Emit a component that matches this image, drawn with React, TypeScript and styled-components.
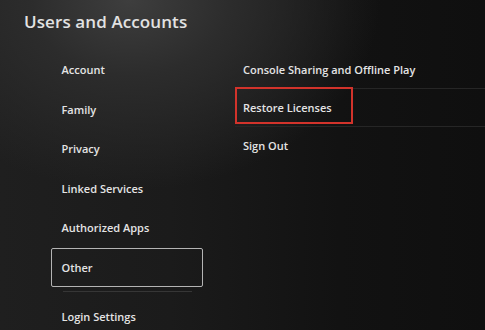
import React from 'react'
import styled, { createGlobalStyle } from 'styled-components'

const GlobalStyle = createGlobalStyle`
    html, body {
        margin: 0;
        padding: 0;
        background: #111;
    }
    * { box-sizing: border-box; }
`

const leftItems: string[] = ['Account', 'Family', 'Privacy', 'Linked Services', 'Authorized Apps', 'Other'];
const rightItems: string[] = ['Console Sharing and Offline Play', 'Restore Licenses', 'Sign Out'];

const Screen = styled.div`
    width: 485px;
    height: 330px;
    overflow: hidden;
    font-family: 'Open Sans', 'Liberation Sans', sans-serif;
    color: #e4e4e4;
    background:
        radial-gradient(ellipse 250px 190px at 130px 0px, #3e3e3e 0%, #2c2c2c 40%, rgba(30,30,30,0) 100%),
        linear-gradient(90deg, #1f1f1f 0%, #1b1b1b 35%, #121212 70%, #0f0f0f 100%);
`

const Title = styled.h1`
    margin: 0;
    padding: 10px 0 0 24px;
    height: 50px;
    font-size: 17px;
    font-weight: 600;
    letter-spacing: 0.1px;
    color: #e2e2e2;
`

const Body = styled.div`
    display: grid;
    grid-template-columns: 152px 250px;
    column-gap: 32px;
    padding-left: 51px;
`

const Menu = styled.ul`
    margin: 0;
    padding: 0;
    list-style: none;
`

const MenuItem = styled.li<{selected?: boolean}>`
    height: 39.5px;
    display: flex;
    align-items: center;
    font-size: 11px;
    font-weight: 600;
    border: 1.5px solid ${props => props.selected ? '#b4b4b4' : 'transparent'};
    border-radius: 2px;
    padding-left: 9.5px;
`

const Divider = styled.li`
    height: 1px;
    margin: 4px 11px 5px 12px;
    background: #363636;
`

const OptionList = styled.ul`
    margin: 1.5px 0 0;
    padding: 0;
    list-style: none;
`

const Option = styled.li`
    position: relative;
    height: 37.5px;
    display: flex;
    align-items: center;
    padding-left: 8px;
    font-size: 11px;
    font-weight: 600;
    border-bottom: 1px solid #262626;
    &:last-child { border-bottom: none; }
`

const Marker = styled.span`
    position: absolute;
    left: 0;
    top: -2px;
    width: 118px;
    height: 37px;
    border: 2px solid #d2332b;
`

export default function App() {
    return (
        <Screen>
            <GlobalStyle />
            <Title>Users and Accounts</Title>
            <Body>
                <Menu>
                    {leftItems.map(item => (
                        <MenuItem key={item} selected={item === 'Other'}>{item}</MenuItem>
                    ))}
                    <Divider />
                    <MenuItem>Login Settings</MenuItem>
                </Menu>
                <OptionList>
                    {rightItems.map(item => (
                        <Option key={item}>
                            {item === 'Restore Licenses' && <Marker />}
                            {item}
                        </Option>
                    ))}
                </OptionList>
            </Body>
        </Screen>
    )
}
